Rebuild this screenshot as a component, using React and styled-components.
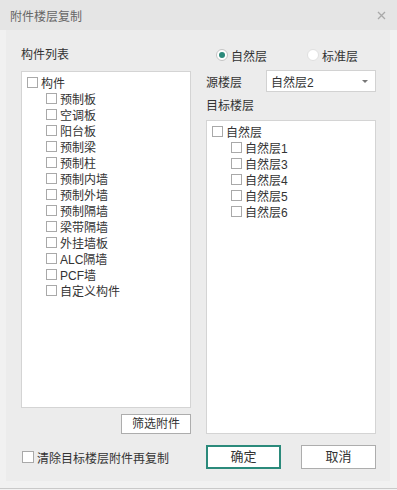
import React from 'react'
import styled, { createGlobalStyle } from 'styled-components'

const GlobalStyle = createGlobalStyle`
	html, body {
		margin: 0;
		padding: 0;
		background: #f2f2f2;
	}
	* {
		box-sizing: border-box;
	}
	body {
		font-family: "Liberation Sans", "Noto Sans CJK SC", sans-serif;
		font-size: 12px;
		color: #333;
	}
`

const Window = styled.div`
	width: 397px;
	height: 489px;
	display: flex;
	flex-direction: column;
	background: #f1f1f1;
	border-bottom: 1px solid #c9c9c9;
`
const TitleBar = styled.div`
	height: 30px;
	flex: none;
	display: flex;
	align-items: center;
	justify-content: space-between;
	padding: 0 10px 0 10px;
	background: #e5e5e5;
	color: #666;
	font-size: 12px;
`
const CloseButton = styled.div`
	width: 12px;
	height: 12px;
	display: flex;
	align-items: center;
	justify-content: center;
	& svg {
		display: block;
	}
`
const Panel = styled.div`
	margin: 0 7px 0 6px;
	height: 451px;
	background: #ececec;
	padding: 14px 14px 12px 15px;
	display: flex;
	flex-direction: column;
`
const Columns = styled.div`
	height: 390px;
	display: grid;
	grid-template-columns: 170px 170px;
	column-gap: 15px;
`
const Column = styled.div`
	display: flex;
	flex-direction: column;
	min-height: 0;
`
const Label = styled.div`
	height: ${props => props.h || 22}px;
	line-height: ${props => props.h || 22}px;
	margin-bottom: ${props => props.mb || 0}px;
	flex: none;
`
const TreeBox = styled.div`
	flex: 1;
	background: #fff;
	border: 1px solid #d4d4d4;
	padding: 2px 5px;
`
const TreeRow = styled.label`
	display: flex;
	align-items: center;
	height: 16px;
	padding-left: ${props => props.indent ? 19 : 0}px;
	white-space: nowrap;
`
const Box = styled.span`
	width: 11px;
	height: 11px;
	flex: none;
	background: #fff;
	border: 1px solid #a9a9a9;
	margin-right: 3px;
`
const SmallButton = styled.div`
	flex: none;
	align-self: flex-end;
	margin-top: 6px;
	width: 70px;
	height: 20px;
	line-height: 18px;
	text-align: center;
	background: #fff;
	border: 1px solid #adadad;
	margin-right: 0;
`
const RadioRow = styled.div`
	height: 22px;
	margin-bottom: 4px;
	display: flex;
	align-items: center;
	padding-left: 10px;
	flex: none;
`
const RadioItem = styled.div`
	display: flex;
	align-items: center;
	width: ${props => props.w || 'auto'};
`
const RadioCircle = styled.span`
	width: 12px;
	height: 12px;
	flex: none;
	border-radius: 50%;
	background: #fff;
	border: 1px solid ${props => props.checked ? '#c4c4c4' : '#e0e0e0'};
	margin-right: 3px;
	display: flex;
	align-items: center;
	justify-content: center;
	&::after {
		content: "";
		width: 6px;
		height: 6px;
		border-radius: 50%;
		background: ${props => props.checked ? '#2b8a7b' : 'transparent'};
	}
`
const SourceRow = styled.div`
	height: 22px;
	display: flex;
	align-items: center;
	justify-content: space-between;
	flex: none;
`
const Select = styled.div`
	width: 110px;
	height: 22px;
	background: #fff;
	border: 1px solid #d2d2d2;
	display: flex;
	align-items: center;
	justify-content: space-between;
	padding: 0 7px 0 4px;
`
const Caret = styled.span`
	width: 0;
	height: 0;
	border-left: 3px solid transparent;
	border-right: 3px solid transparent;
	border-top: 3px solid #777;
`
const Footer = styled.div`
	margin-top: 11px;
	height: 24px;
	display: grid;
	grid-template-columns: 170px 170px;
	column-gap: 15px;
	align-items: center;
`
const FooterCheck = styled.label`
	display: flex;
	align-items: center;
	padding-left: 1px;
	white-space: nowrap;
	& span:first-child {
		width: 12px;
		height: 12px;
	}
`
const ButtonGroup = styled.div`
	display: flex;
	justify-content: space-between;
`
const DialogButton = styled.div`
	width: 75px;
	height: 24px;
	text-align: center;
	line-height: ${props => props.primary ? 20 : 22}px;
	background: #fff;
	font-size: 13px;
	border: ${props => props.primary ? '2px solid #2b8a7b' : '1px solid #adadad'};
`

const parts = ['预制板', '空调板', '阳台板', '预制梁', '预制柱', '预制内墙', '预制外墙', '预制隔墙', '梁带隔墙', '外挂墙板', 'ALC隔墙', 'PCF墙', '自定义构件']
const floors = ['自然层1', '自然层3', '自然层4', '自然层5', '自然层6']

export default function App() {
	return (
		<Window>
			<GlobalStyle />
			<TitleBar>
				<span>附件楼层复制</span>
				<CloseButton>
					<svg width="9" height="9" viewBox="0 0 9 9">
						<path d="M1 1L8 8M8 1L1 8" stroke="#a9a9a9" strokeWidth="1.3" />
					</svg>
				</CloseButton>
			</TitleBar>
			<Panel>
				<Columns>
					<Column>
						<Label mb={5}>构件列表</Label>
						<TreeBox>
							<TreeRow><Box />构件</TreeRow>
							{parts.map((p, i) => (
								<TreeRow indent key={i}><Box />{p}</TreeRow>
							))}
						</TreeBox>
						<SmallButton>筛选附件</SmallButton>
					</Column>
					<Column>
						<RadioRow>
							<RadioItem w="91px"><RadioCircle checked />自然层</RadioItem>
							<RadioItem><RadioCircle />标准层</RadioItem>
						</RadioRow>
						<SourceRow>
							<span>源楼层</span>
							<Select>
								<span>自然层2</span>
								<Caret />
							</Select>
						</SourceRow>
						<Label h={28}>目标楼层</Label>
						<TreeBox>
							<TreeRow><Box />自然层</TreeRow>
							{floors.map((f, i) => (
								<TreeRow indent key={i}><Box />{f}</TreeRow>
							))}
						</TreeBox>
					</Column>
				</Columns>
				<Footer>
					<FooterCheck><Box />清除目标楼层附件再复制</FooterCheck>
					<ButtonGroup>
						<DialogButton primary>确定</DialogButton>
						<DialogButton>取消</DialogButton>
					</ButtonGroup>
				</Footer>
			</Panel>
		</Window>
	)
}
